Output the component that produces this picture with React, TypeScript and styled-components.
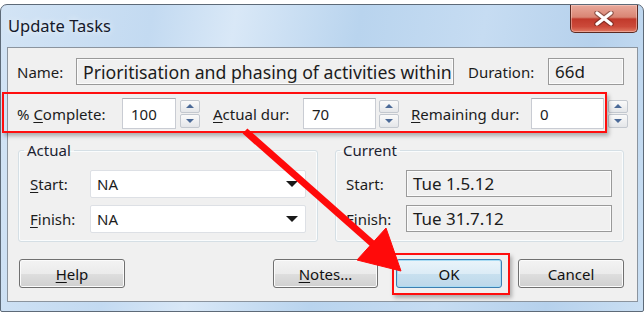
import styled, { createGlobalStyle } from "styled-components";

const GlobalStyle = createGlobalStyle`
	html, body {
		margin: 0;
		padding: 0;
		background: #f4f4f4;
	}
	body {
		font-family: "Noto Sans", "Open Sans", "DejaVu Sans", sans-serif;
		font-size: 15px;
		color: #1c1c1c;
	}
`;

const Page = styled.div`
	width: 644px;
	height: 314px;
	padding-top: 4px;
	box-sizing: border-box;
	background: #ffffff;
	overflow: hidden;
`;

const Window = styled.div`
	position: relative;
	width: 644px;
	height: 308px;
	box-sizing: border-box;
	border: 1px solid #5d6a78;
	border-radius: 7px 7px 2px 2px;
	background: linear-gradient(
		100deg,
		#d3e4f5 0%,
		#c3daf1 22%,
		#d9e8f7 34%,
		#b9d4ee 52%,
		#c6dcf2 70%,
		#b6d1ec 86%,
		#cadff3 100%
	);
	display: flex;
	flex-direction: column;
`;

const TitleBar = styled.div`
	height: 42px;
	display: flex;
	justify-content: space-between;
	align-items: flex-start;
	padding-left: 7px;
	padding-right: 5px;
`;

const Title = styled.div`
	margin-top: 9px;
	font-size: 16.5px;
	color: #15192a;
	text-shadow: 0 0 6px rgba(255, 255, 255, 0.9);
`;

const CloseButton = styled.div`
	width: 68px;
	height: 28px;
	box-sizing: border-box;
	border: 1px solid #5b2a22;
	border-top: none;
	border-radius: 0 0 5px 5px;
	background: linear-gradient(
		#e9a99b 0%,
		#d98574 45%,
		#c1392b 52%,
		#cc4a3a 80%,
		#e07a63 100%
	);
	box-shadow: inset 0 0 0 1px rgba(255, 220, 210, 0.45);
	display: flex;
	align-items: center;
	justify-content: center;
`;

const Client = styled.div`
	margin: 0 5px 0 6px;
	height: 255px;
	box-sizing: border-box;
	border: 1px solid #8b949e;
	background: #f0f0f0;
	padding: 10px 0 0 9px;
	display: flex;
	flex-direction: column;
`;

const Row = styled.div<{ $height: number; $gap?: number }>`
	display: flex;
	align-items: center;
	height: ${(p) => p.$height}px;
	margin-top: ${(p) => p.$gap || 0}px;
`;

const Label = styled.div<{ $width: number; $left?: number }>`
	width: ${(p) => p.$width}px;
	margin-left: ${(p) => p.$left || 0}px;
	flex-shrink: 0;
	white-space: nowrap;
`;

const U = styled.span`
	text-decoration: underline;
	text-underline-offset: 2px;
`;

const ReadOnlyBox = styled.div<{ $width: number; $size?: number }>`
	width: ${(p) => p.$width}px;
	height: 27px;
	box-sizing: border-box;
	border: 1px solid #9a9a9a;
	box-shadow: inset 0 0 0 1px #fbfbfb;
	background: #f0f0f0;
	padding-left: 6px;
	font-size: ${(p) => p.$size || 17}px;
	display: flex;
	align-items: center;
	white-space: nowrap;
	overflow: hidden;
`;

const TextBox = styled.div<{ $width: number }>`
	width: ${(p) => p.$width}px;
	height: 31px;
	box-sizing: border-box;
	border: 1px solid #c9ccd3;
	border-top-color: #abadb3;
	background: #ffffff;
	padding-left: 8px;
	display: flex;
	align-items: center;
`;

const Spinner = styled.div<{ $left: number; $right: number }>`
	width: 20px;
	height: 28px;
	margin-left: ${(p) => p.$left}px;
	margin-right: ${(p) => p.$right}px;
	display: flex;
	flex-direction: column;
	gap: 1px;
	flex-shrink: 0;
`;

const SpinHalf = styled.div`
	flex: 1;
	box-sizing: border-box;
	border: 1px solid #c3c8cf;
	border-radius: 2px;
	background: linear-gradient(#fafafa, #e4e6e9);
	display: flex;
	align-items: center;
	justify-content: center;
`;

const Tri = styled.div<{ $down?: boolean }>`
	width: 0;
	height: 0;
	border-left: 4px solid transparent;
	border-right: 4px solid transparent;
	${(p) =>
		p.$down
			? "border-top: 4px solid #4b6a98;"
			: "border-bottom: 4px solid #4b6a98;"}
`;

const Groups = styled.div`
	display: flex;
	gap: 17px;
	margin-top: 12px;
	margin-left: 1px;
`;

const Group = styled.fieldset<{ $width: number; $pad: number }>`
	width: ${(p) => p.$width}px;
	height: 101px;
	box-sizing: border-box;
	margin: 0;
	border: 1px solid #d5dfe5;
	border-radius: 3px;
	padding: 11px 0 0 ${(p) => p.$pad}px;
	display: flex;
	flex-direction: column;
	gap: 7px;
	box-shadow: inset 0 0 0 1px #fafcfd;
`;

const Legend = styled.legend`
	padding: 0 3px;
	margin-left: -6px;
	line-height: 18px;
	color: #1c2230;
`;

const GroupRow = styled.div<{ $top?: number }>`
	display: flex;
	align-items: center;
	margin-top: ${(p) => p.$top || 0}px;
`;

const Combo = styled.div<{ $width: number }>`
	width: ${(p) => p.$width}px;
	height: 28px;
	box-sizing: border-box;
	border: 1px solid #dde0e5;
	border-radius: 2px;
	background: #ffffff;
	padding: 0 7px 0 6px;
	display: flex;
	align-items: center;
	justify-content: space-between;
`;

const ComboArrow = styled.div`
	width: 0;
	height: 0;
	border-left: 6px solid transparent;
	border-right: 6px solid transparent;
	border-top: 6px solid #1a1a1a;
`;

const ButtonRow = styled.div`
	display: flex;
	margin-top: 17px;
	margin-left: 2px;
`;

const Button = styled.div<{ $default?: boolean; $left?: number; $width?: number }>`
	width: ${(p) => p.$width || 106}px;
	height: 29px;
	margin-left: ${(p) => p.$left || 0}px;
	box-sizing: border-box;
	border: 1px solid ${(p) => (p.$default ? "#3c7fb1" : "#707070")};
	border-radius: 3px;
	background: ${(p) =>
		p.$default
			? "linear-gradient(#eaf4fa 0%, #dcecf6 50%, #c8e0ef 51%, #bdd8ea 100%)"
			: "linear-gradient(#f3f3f3 0%, #ebebeb 50%, #dedede 51%, #d0d0d0 100%)"};
	box-shadow: inset 0 0 0 1px ${(p) => (p.$default ? "#a9dcf4" : "#fbfbfb")};
	display: flex;
	align-items: center;
	justify-content: center;
	color: #111111;
`;

const Highlight = styled.div<{ $x: number; $y: number; $w: number; $h: number }>`
	position: absolute;
	left: ${(p) => p.$x}px;
	top: ${(p) => p.$y}px;
	width: ${(p) => p.$w}px;
	height: ${(p) => p.$h}px;
	box-sizing: border-box;
	border: 2px solid #ff0e0e;
	box-shadow: 2px 3px 4px rgba(0, 0, 0, 0.28);
	pointer-events: none;
`;

const ArrowLayer = styled.svg`
	position: absolute;
	left: -1px;
	top: -1px;
	pointer-events: none;
`;

const SpinBox = ({ left, right }: { left: number; right: number }) => (
	<Spinner $left={left} $right={right}>
		<SpinHalf>
			<Tri />
		</SpinHalf>
		<SpinHalf>
			<Tri $down />
		</SpinHalf>
	</Spinner>
);

const App = () => {
	return (
		<Page>
			<GlobalStyle />
			<Window>
				<TitleBar>
					<Title>Update Tasks</Title>
					<CloseButton>
						<svg width="20" height="15" viewBox="0 0 20 15">
							<path
								d="M3 2 L17 13 M17 2 L3 13"
								stroke="#4a1d18"
								strokeWidth="5.5"
								strokeLinecap="round"
								opacity="0.5"
							/>
							<path
								d="M3 2 L17 13 M17 2 L3 13"
								stroke="#ffffff"
								strokeWidth="3.2"
								strokeLinecap="round"
							/>
						</svg>
					</CloseButton>
				</TitleBar>

				<Client>
					<Row $height={27}>
						<Label $width={59}>Name:</Label>
						<ReadOnlyBox $width={378} $size={17.7}>
							Prioritisation and phasing of activities within
						</ReadOnlyBox>
						<Label $width={80} $left={14}>
							Duration:
						</Label>
						<ReadOnlyBox $width={76}>66d</ReadOnlyBox>
					</Row>

					<Row $height={31} $gap={13}>
						<Label $width={105}>
							% <U>C</U>omplete:
						</Label>
						<TextBox $width={54}>100</TextBox>
						<SpinBox left={4} right={13} />
						<Label $width={90}>
							<U>A</U>ctual dur:
						</Label>
						<TextBox $width={73}>70</TextBox>
						<SpinBox left={3} right={12} />
						<Label $width={120}>
							<U>R</U>emaining dur:
						</Label>
						<TextBox $width={73}>0</TextBox>
						<SpinBox left={4} right={0} />
					</Row>

					<Groups>
						<Group $width={300} $pad={11}>
							<Legend>Actual</Legend>
							<GroupRow>
								<Label $width={60}>
									<U>S</U>tart:
								</Label>
								<Combo $width={216}>
									NA
									<ComboArrow />
								</Combo>
							</GroupRow>
							<GroupRow>
								<Label $width={60}>
									<U>F</U>inish:
								</Label>
								<Combo $width={216}>
									NA
									<ComboArrow />
								</Combo>
							</GroupRow>
						</Group>
						<Group $width={289} $pad={10}>
							<Legend>Current</Legend>
							<GroupRow>
								<Label $width={60}>Start:</Label>
								<ReadOnlyBox $width={206}>Tue 1.5.12</ReadOnlyBox>
							</GroupRow>
							<GroupRow $top={1}>
								<Label $width={60}>Finish:</Label>
								<ReadOnlyBox $width={206}>Tue 31.7.12</ReadOnlyBox>
							</GroupRow>
						</Group>
					</Groups>

					<ButtonRow>
						<Button>
							<U>H</U>elp
						</Button>
						<Button $left={148} $width={105}>
							<U>N</U>otes...
						</Button>
						<Button $default $left={18}>
							OK
						</Button>
						<Button $left={16}>Cancel</Button>
					</ButtonRow>
				</Client>

				<Highlight $x={1} $y={87} $w={605} $h={41} />
				<Highlight $x={391} $y={248} $w={118} $h={42} />

				<ArrowLayer width="644" height="310" viewBox="0 4 644 310">
					<g fill="#ff0a0a" stroke="#ff0a0a">
						<line
							x1="245"
							y1="131"
							x2="374"
							y2="245"
							strokeWidth="7"
						/>
						<polygon
							points="357,260 386,228 401,271"
							strokeWidth="1"
							strokeLinejoin="miter"
						/>
					</g>
				</ArrowLayer>
			</Window>
		</Page>
	);
};

export default App;
